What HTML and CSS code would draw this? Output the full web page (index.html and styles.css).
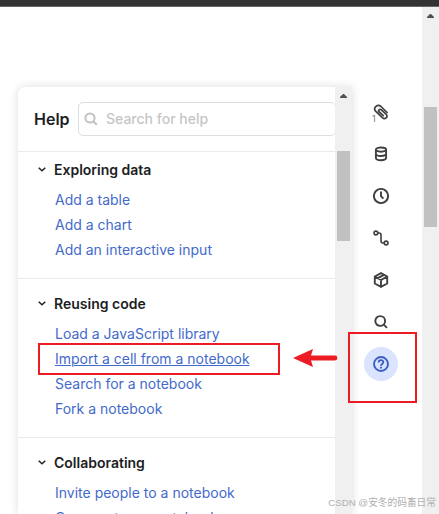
FILE: index.html
```
<!DOCTYPE html>
<html lang="en">
<head>
<meta charset="utf-8">
<title>Help</title>
<link rel="stylesheet" href="styles.css">
</head>
<body>
<div class="topbar"></div>
<div class="page">
  <main class="content">
    <aside class="panel">
      <div class="panel-body">
        <header class="panel-header">
          <h1>Help</h1>
          <div class="search">
            <svg width="14" height="14" viewBox="0 0 14 14" fill="none" stroke="#c2c2c2" stroke-width="2"><circle cx="6" cy="6" r="4.6"/><path d="M9.2 9.2 12.8 12.8"/></svg>
            <span>Search for help</span>
          </div>
        </header>
        <section class="group first">
          <h2><svg class="chev" viewBox="0 0 8 5"><path d="M.7.8 4 3.8 7.3.8"/></svg>Exploring data</h2>
          <ul><li><a>Add a table</a></li><li><a>Add a chart</a></li><li><a>Add an interactive input</a></li></ul>
        </section>
        <section class="group">
          <h2><svg class="chev" viewBox="0 0 8 5"><path d="M.7.8 4 3.8 7.3.8"/></svg>Reusing code</h2>
          <ul><li><a>Load a JavaScript library</a></li><li><a class="hover">Import a cell from a notebook</a></li><li><a>Search for a notebook</a></li><li><a>Fork a notebook</a></li></ul>
        </section>
        <section class="group">
          <h2><svg class="chev" viewBox="0 0 8 5"><path d="M.7.8 4 3.8 7.3.8"/></svg>Collaborating</h2>
          <ul><li><a>Invite people to a notebook</a></li><li><a>Comment on a notebook</a></li></ul>
        </section>
      </div>
      <div class="scrollbar"><svg class="up" viewBox="0 0 7 4"><path d="M0 4V3L3 0H4L7 3V4Z"/></svg><div class="thumb"></div></div>
    </aside>
  </main>
  <nav class="rail">
    <div class="tool attach">
      <svg width="16" height="16" viewBox="0 0 16 16"><path d="M14.6 9 8 2.5C4.6-.5-.3 3.6 2.6 7.2L9.3 13.6C12 16 15.6 13.1 13.2 10.3L8.4 5.8C6.6 4.5 4.7 6.4 6.2 8L10.8 12.2"/></svg>
      <span>1</span>
    </div>
    <div class="tool"><svg width="16" height="16" viewBox="0 0 16 16"><ellipse cx="8" cy="3.6" rx="5.1" ry="2.1"/><path d="M2.9 3.6V12C2.9 14.9 13.1 14.9 13.1 12V3.6M2.9 7.8C2.9 10.7 13.1 10.7 13.1 7.8"/></svg></div>
    <div class="tool"><svg width="16" height="16" viewBox="0 0 16 16"><circle cx="8" cy="8" r="7.1"/><path d="M8 3.4V8.2L10.4 10.6"/></svg></div>
    <div class="tool"><svg class="thin" width="16" height="16" viewBox="0 0 16 16"><circle cx="2.9" cy="3" r="1.9"/><circle cx="13.1" cy="13" r="1.9"/><path d="M4.8 3H6Q8 3 8 5V11Q8 13 10 13H11.2"/></svg></div>
    <div class="tool"><svg width="16" height="16" viewBox="0 0 16 16"><path d="M8 1.2 14.2 4.5V11.5L8 14.9 1.8 11.5V4.5ZM1.8 4.7 8 8 14.2 4.7M8 8V15M4.7 6.2 11 2.8"/></svg></div>
    <div class="tool"><svg width="16" height="16" viewBox="0 0 16 16"><circle cx="7.2" cy="7" r="4.9"/><path d="M10.3 10.2 14 13.9"/></svg></div>
    <div class="tool active"><svg width="16" height="16" viewBox="0 0 16 16"><circle cx="8" cy="8" r="7"/><path d="M5.7 6.4C5.7 3.3 10.4 3.4 10.3 6.3C10.2 8 8 7.9 8 9.8M8 10.8V12.5"/></svg></div>
  </nav>
  <div class="scrollbar outer"><svg class="up" viewBox="0 0 7 4"><path d="M0 4V3L3 0H4L7 3V4Z"/></svg><div class="thumb"></div></div>
</div>
<div class="mark mark-link"></div>
<div class="mark mark-help"></div>
<svg class="arrow" viewBox="0 0 46 18"><path d="M0 9 20 0 18 6.6H42A2.4 2.4 0 0 1 42 11.4H18L20 18Z"/></svg>
<div class="watermark">CSDN @安冬的码畜日常</div>
</body>
</html>
```
FILE: styles.css
```
* { box-sizing: border-box; }
body {
  margin: 0;
  width: 439px;
  height: 514px;
  overflow: hidden;
  position: relative;
  background: #fff;
  font-family: Inter, "Liberation Sans", sans-serif;
  color: #1b1e23;
}
.topbar { height: 7px; background: #333; border-bottom: 1px solid #656565; }
.page { display: flex; height: 507px; }
.content { width: 352px; padding: 80px 0 0 18px; }
.panel {
  display: flex;
  width: 334px;
  height: 427px;
  background: #fff;
  border-radius: 7px 0 0 0;
  box-shadow: 0 0 10px rgba(0, 0, 0, .14);
}
.panel-body { width: 317px; height: 427px; overflow: hidden; }
.panel-header {
  display: flex;
  align-items: center;
  height: 65px;
  padding-left: 16px;
  border-bottom: 1px solid #eaeaea;
}
h1 { flex: none; width: 44px; margin: 0; font-size: 16px; line-height: 20px; font-weight: 600; }
.search {
  flex: none;
  display: flex;
  align-items: center;
  width: 258px;
  height: 34px;
  padding-left: 5px;
  border: 1px solid #dedede;
  border-radius: 5px;
  font-size: 14px;
  font-weight: 500;
  color: #c6c6c6;
}
.search svg { margin-right: 8px; }
.search span { position: relative; top: -1px; }
.group { padding: 14px 0 16px 20px; border-bottom: 1px solid #eaeaea; }
.group.first { padding-top: 7px; }
h2 {
  display: flex;
  align-items: center;
  height: 20px;
  margin: 0 0 8px;
  font-size: 14px;
  font-weight: 600;
}
.chev { width: 8px; height: 5px; margin-right: 8px; fill: none; stroke: #222; stroke-width: 1.5; }
ul { margin: 0; padding: 0 0 0 17px; list-style: none; }
li { height: 25px; line-height: 25px; font-size: 14px; white-space: nowrap; }
a { color: #436acb; }
.hover { text-decoration: underline; text-decoration-thickness: 1px; text-underline-offset: 1px; }
.scrollbar {
  display: flex;
  flex-direction: column;
  align-items: center;
  width: 17px;
  padding-top: 7px;
  background: #f0f0f0;
}
.up { flex: none; width: 7px; height: 4px; fill: #505050; }
.thumb { width: 13px; height: 90px; margin-top: 53px; background: #c1c1c1; }
.outer .thumb { height: 120px; margin-top: 89px; }
.rail {
  display: flex;
  flex-direction: column;
  align-items: center;
  width: 70px;
  padding: 88px 12px 0 0;
}
.tool {
  display: flex;
  flex: none;
  align-items: center;
  justify-content: center;
  width: 34px;
  height: 34px;
  margin-bottom: 8px;
  position: relative;
}
.tool svg { fill: none; stroke: #404040; stroke-width: 1.9; }
.tool svg.thin { stroke-width: 1.6; }
.tool.attach svg { stroke-width: 1.7; }
.attach span {
  position: absolute;
  left: 8px;
  top: 19px;
  font-size: 9px;
  line-height: 10px;
  color: #777;
}
.active { border-radius: 50%; background: #dbe4ff; }
.tool.active svg { stroke: #3b5fc0; }
.mark { position: absolute; border: 2px solid #ed1c24; }
.mark-link { left: 38px; top: 343px; width: 242px; height: 32px; }
.mark-help { left: 348px; top: 332px; width: 69px; height: 71px; }
.arrow { position: absolute; left: 293px; top: 349px; width: 46px; height: 18px; fill: #ed1c24; }
.watermark {
  position: absolute;
  right: 3px;
  top: 495px;
  font: 9.7px/15px "Liberation Sans", "Noto Sans CJK SC", sans-serif;
  white-space: nowrap;
  color: #b0b0b0;
}
```
